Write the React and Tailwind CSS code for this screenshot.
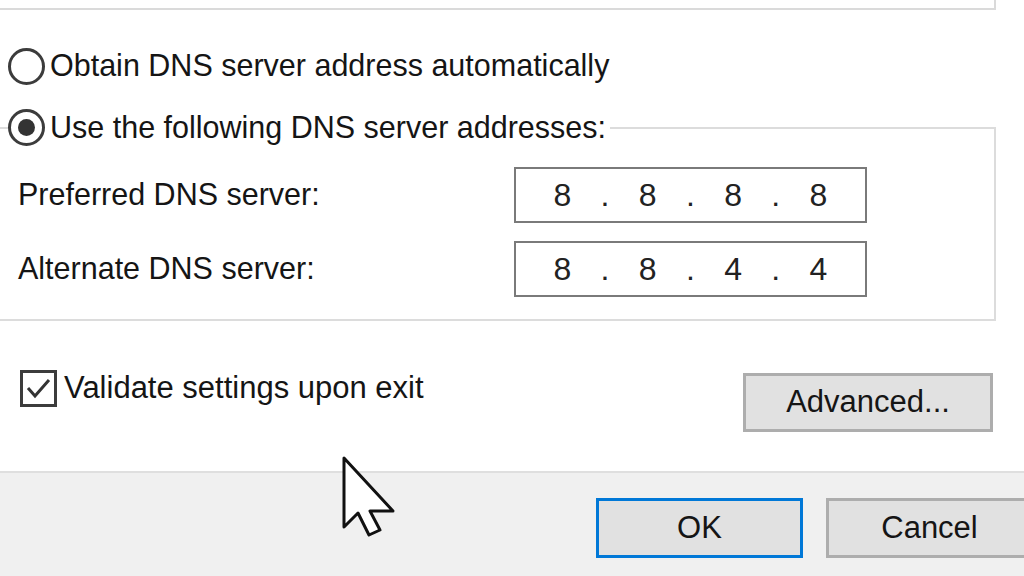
// DNS settings part of the IPv4 properties dialog, zoomed in
import React from "react";

const font = { fontFamily: '"Liberation Sans", Arial, sans-serif' };

const Radio = ({ checked }) => (
  <span className="flex h-[37px] w-[37px] shrink-0 items-center justify-center rounded-full border-[3px] border-[#3c3c3c] bg-white">
    {checked && <span className="h-[17px] w-[17px] rounded-full bg-[#333]" />}
  </span>
);

const IpBox = ({ parts }) => {
  // digit, dot, digit, dot ... each in an even-width cell
  const cells = [];
  parts.forEach((p, i) => {
    cells.push(p);
    if (i < parts.length - 1) cells.push(".");
  });
  return (
    <div className="flex h-[56px] w-[353px] shrink-0 items-center border-2 border-[#7a7a7a] bg-white pl-[25px] text-[32px] text-[#222]">
      {cells.map((c, i) => (
        <span key={i} className="w-[42.7px] text-center leading-none">
          {c}
        </span>
      ))}
    </div>
  );
};

const DnsRow = ({ label, parts }) => (
  <div className="flex items-center pl-[10px]">
    <span className="w-[496px] shrink-0 text-[30.5px] text-[#151515]">{label}</span>
    <IpBox parts={parts} />
  </div>
);

const Button = ({ children, primary, className = "" }) => (
  <button
    className={
      "flex shrink-0 items-center justify-center bg-[#e1e1e1] text-[31px] text-[#151515] " +
      (primary ? "border-[3px] border-[#0078d7] " : "border-[3px] border-[#adadad] ") +
      className
    }
  >
    {children}
  </button>
);

export default function App() {
  return (
    <div
      className="relative flex h-[576px] w-[1024px] flex-col overflow-hidden bg-white"
      style={font}
    >
      {/* end of the group above */}
      <div className="-ml-[12px] h-[10px] w-[1008px] shrink-0 border-r-2 border-b-2 border-[#dadada]" />

      <label className="mt-[37px] ml-[8px] flex h-[38px] items-center gap-[5px]">
        <Radio />
        <span className="text-[30.5px] text-[#151515]">Obtain DNS server address automatically</span>
      </label>

      <fieldset className="mt-[20px] -ml-[12px] w-[1008px] shrink-0 border-2 border-[#dcdcdc] pl-[18px] pt-[16px] pb-[22px]">
        <legend className="flex items-center gap-[5px] pr-[4px]">
          <Radio checked />
          <span className="text-[30.5px] text-[#151515]">Use the following DNS server addresses:</span>
        </legend>
        <div className="flex flex-col gap-[18px]">
          <DnsRow label="Preferred DNS server:" parts={["8", "8", "8", "8"]} />
          <DnsRow label="Alternate DNS server:" parts={["8", "8", "4", "4"]} />
        </div>
      </fieldset>

      <div className="mt-[44px] flex shrink-0 items-start pl-[20px] pr-[31px]">
        <label className="flex items-center gap-[7px]">
          <span className="flex h-[37px] w-[37px] items-center justify-center border-[3px] border-[#3c3c3c] bg-white">
            <svg width="31" height="31" viewBox="0 0 31 31">
              <polyline
                points="5,15 12,23 26,7"
                fill="none"
                stroke="#333"
                strokeWidth="3"
              />
            </svg>
          </span>
          <span className="text-[31px] text-[#151515]">Validate settings upon exit</span>
        </label>
        <Button className="mt-[8px] ml-auto h-[59px] w-[250px]">Advanced...</Button>
      </div>

      {/* footer strip */}
      <div className="mt-[39px] flex flex-1 gap-[23px] border-t-2 border-[#dfdfdf] bg-[#f0f0f0] pt-[25px] pl-[596px]">
        <Button primary className="h-[60px] w-[207px]">OK</Button>
        <Button className="h-[60px] w-[207px]">Cancel</Button>
      </div>

      {/* mouse pointer */}
      <svg
        className="absolute left-[342px] top-[456px]"
        width="56"
        height="84"
        viewBox="-2 -2 56 84"
      >
        <polygon
          points="0,0 0,69 14,55 25,77 36,72 26,53 49,53"
          fill="#fff"
          stroke="#111"
          strokeWidth="3"
          strokeLinejoin="round"
        />
      </svg>
    </div>
  );
}
